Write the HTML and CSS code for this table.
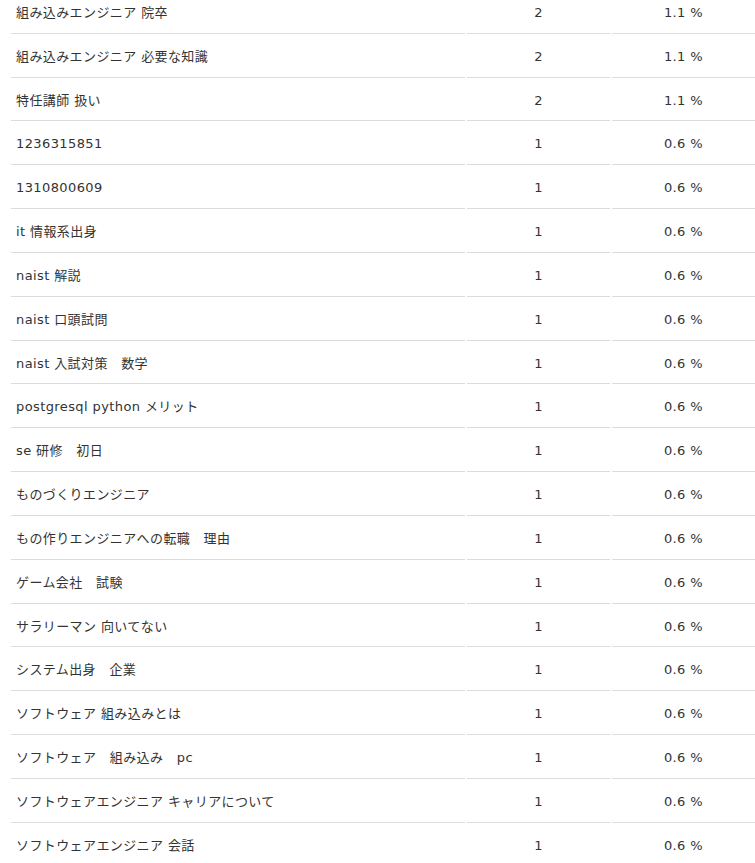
FILE: index.html
```html
<!DOCTYPE html>
<html lang="ja">
<head>
<meta charset="utf-8">
<title>キーワード</title>
<link rel="stylesheet" href="styles.css">
</head>
<body>
<table class="kw-table">
<colgroup><col class="c-word"><col class="c-count"><col class="c-rate"></colgroup>
<tbody>
<tr><td class="word">組み込みエンジニア 院卒</td><td class="num">2</td><td class="num">1.1 %</td></tr>
<tr><td class="word">組み込みエンジニア 必要な知識</td><td class="num">2</td><td class="num">1.1 %</td></tr>
<tr><td class="word">特任講師 扱い</td><td class="num">2</td><td class="num">1.1 %</td></tr>
<tr><td class="word">1236315851</td><td class="num">1</td><td class="num">0.6 %</td></tr>
<tr><td class="word">1310800609</td><td class="num">1</td><td class="num">0.6 %</td></tr>
<tr><td class="word">it 情報系出身</td><td class="num">1</td><td class="num">0.6 %</td></tr>
<tr><td class="word">naist 解説</td><td class="num">1</td><td class="num">0.6 %</td></tr>
<tr><td class="word">naist 口頭試問</td><td class="num">1</td><td class="num">0.6 %</td></tr>
<tr><td class="word">naist 入試対策　数学</td><td class="num">1</td><td class="num">0.6 %</td></tr>
<tr><td class="word">postgresql python メリット</td><td class="num">1</td><td class="num">0.6 %</td></tr>
<tr><td class="word">se 研修　初日</td><td class="num">1</td><td class="num">0.6 %</td></tr>
<tr><td class="word">ものづくりエンジニア</td><td class="num">1</td><td class="num">0.6 %</td></tr>
<tr><td class="word">もの作りエンジニアへの転職　理由</td><td class="num">1</td><td class="num">0.6 %</td></tr>
<tr><td class="word">ゲーム会社　試験</td><td class="num">1</td><td class="num">0.6 %</td></tr>
<tr><td class="word">サラリーマン 向いてない</td><td class="num">1</td><td class="num">0.6 %</td></tr>
<tr><td class="word">システム出身　企業</td><td class="num">1</td><td class="num">0.6 %</td></tr>
<tr><td class="word">ソフトウェア 組み込みとは</td><td class="num">1</td><td class="num">0.6 %</td></tr>
<tr><td class="word">ソフトウェア　組み込み　pc</td><td class="num">1</td><td class="num">0.6 %</td></tr>
<tr><td class="word">ソフトウェアエンジニア キャリアについて</td><td class="num">1</td><td class="num">0.6 %</td></tr>
<tr><td class="word">ソフトウェアエンジニア 会話</td><td class="num">1</td><td class="num">0.6 %</td></tr>
</tbody>
</table>
</body>
</html>
```
FILE: styles.css
```css
html, body {
  margin: 0;
  padding: 0;
  background: #fff;
}
body {
  font-family: "DejaVu Sans", "Noto Sans CJK JP", sans-serif;
  font-size: 13px;
  letter-spacing: 0.4px;
  color: #333;
  overflow: hidden;
}
.kw-table {
  border-collapse: separate;
  border-spacing: 2px 0;
  table-layout: fixed;
  width: 748px;
  margin: -10px 0 0 9px;
}
.c-word { width: 454px; }
.c-count { width: 143px; }
.c-rate { width: 143px; }
.kw-table td {
  border-bottom: 1px solid #dcdcdc;
  padding: 13px 0 9px;
  line-height: 20.83px;
  white-space: nowrap;
}
.kw-table td.word {
  padding-left: 5px;
  text-align: left;
}
.kw-table td.num {
  text-align: center;
}
```
